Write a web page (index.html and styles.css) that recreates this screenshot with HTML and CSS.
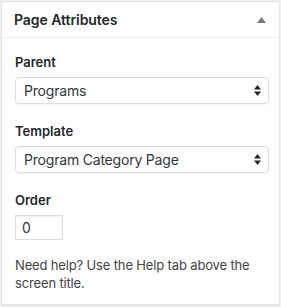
FILE: index.html
```html
<!DOCTYPE html>
<html>
<head>
<meta charset="utf-8">
<link rel="stylesheet" href="styles.css">
</head>
<body>
<div class="postbox">
  <div class="hndle">
    <h2 class="title">Page Attributes</h2>
    <svg class="toggle" width="9" height="6" viewBox="0 0 9 6"><polygon points="4.5,0 9,6 0,6" fill="#72777c"/></svg>
  </div>
  <div class="inside">
    <p class="label">Parent</p>
    <div class="select-wrap">
      <select class="select"><option>Programs</option></select>
      <svg class="arrows" width="7" height="11" viewBox="0 0 7 11"><polygon points="3.5,0 7,4.5 0,4.5" fill="#222"/><polygon points="0,6.5 7,6.5 3.5,11" fill="#222"/></svg>
    </div>
    <p class="label">Template</p>
    <div class="select-wrap">
      <select class="select"><option>Program Category Page</option></select>
      <svg class="arrows" width="7" height="11" viewBox="0 0 7 11"><polygon points="3.5,0 7,4.5 0,4.5" fill="#222"/><polygon points="0,6.5 7,6.5 3.5,11" fill="#222"/></svg>
    </div>
    <p class="label">Order</p>
    <input class="order" type="text" value="0">
    <p class="help">Need help? Use the Help tab above the screen title.</p>
  </div>
</div>
</body>
</html>
```
FILE: styles.css
```css
html, body {
  margin: 0;
  background: #f1f1f1;
}
body {
  padding: 1px 1px 2px 1px;
  font-family: Inter, "Liberation Sans", Arial, sans-serif;
  color: #23282d;
}
.postbox {
  background: #fff;
  border: 1px solid #e5e5e5;
  box-shadow: 0 1px 1px rgba(0,0,0,.04);
  box-sizing: border-box;
  height: 304px;
}
.hndle {
  display: flex;
  align-items: center;
  justify-content: space-between;
  height: 35px;
  padding: 0 12px 0 12px;
  border-bottom: 1px solid #eee;
}
.title {
  margin: 0;
  font-size: 14px;
  font-weight: 600;
  line-height: 20px;
  padding-top: 1px;
  letter-spacing: -0.05px;
}
.toggle {
  display: block;
  margin-right: 1px;
}
.inside {
  padding: 15px 10px 12px 13px;
}
.label {
  margin: 0 0 6px 0;
  font-size: 13px;
  font-weight: 600;
  line-height: 18px;
  color: #23282d;
}
.label + .select-wrap {
  margin-top: 0;
}
.select-wrap {
  position: relative;
  width: 254px;
  margin-bottom: 18px;
}
.select {
  display: block;
  -webkit-appearance: none;
  appearance: none;
  width: 254px;
  height: 27px;
  box-sizing: border-box;
  border: 1px solid #ddd;
  border-radius: 4px;
  background: #fff;
  font-family: inherit;
  font-size: 14px;
  letter-spacing: -0.2px;
  color: #32373c;
  padding: 0 20px 0 8px;
  margin: 0;
  box-shadow: 0 1px 1px rgba(0,0,0,.04);
}
.arrows {
  position: absolute;
  right: 8px;
  top: 8px;
}
.order {
  display: block;
  width: 48px;
  height: 25px;
  box-sizing: border-box;
  border: 1px solid #ddd;
  border-radius: 0;
  font-family: inherit;
  font-size: 14px;
  color: #32373c;
  padding: 0 6px;
  margin: 0 0 16px 0;
  box-shadow: inset 0 1px 2px rgba(0,0,0,.07);
}
.help {
  margin: 0;
  font-size: 13px;
  line-height: 18px;
  letter-spacing: -0.15px;
  color: #444;
}
```
